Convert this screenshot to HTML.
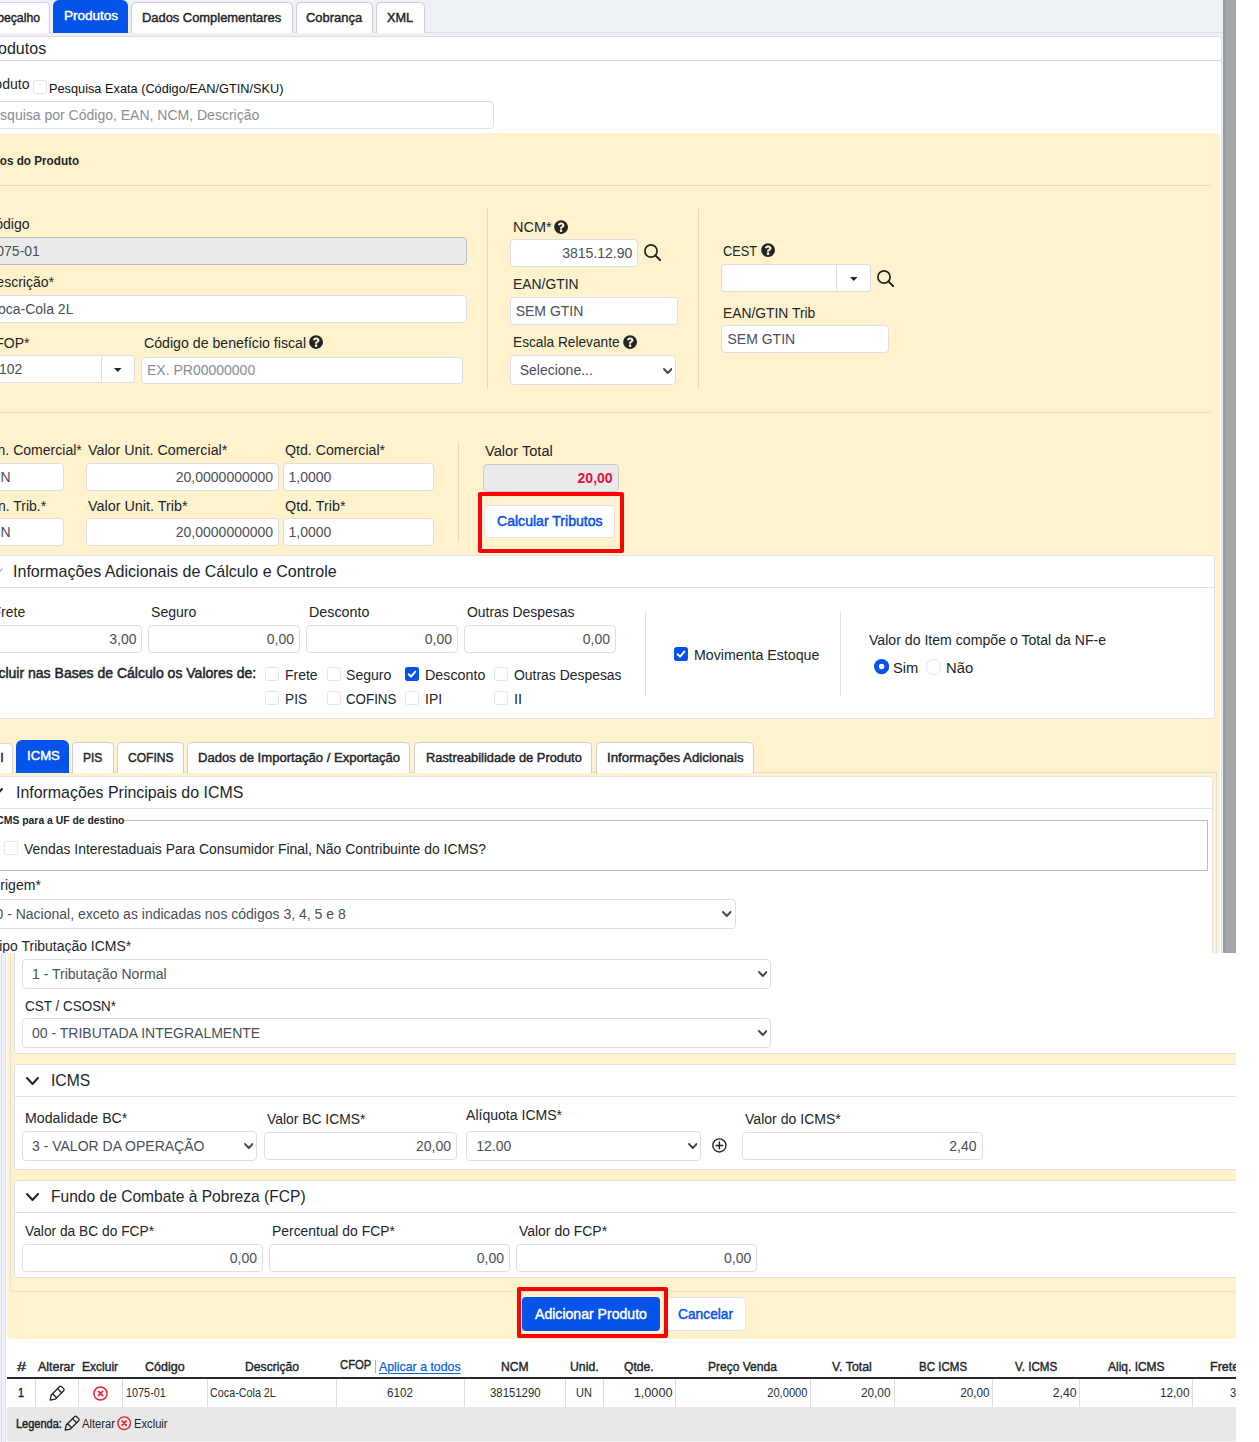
<!DOCTYPE html>
<html lang="pt-BR"><head><meta charset="utf-8"><title>NF-e - Produtos</title>
<style>
html,body{margin:0;padding:0;background:#fff;}
body{width:1259px;height:1442px;position:relative;overflow:hidden;font-family:"Liberation Sans",Arial,sans-serif;}
.clip{position:absolute;left:0;width:1236px;overflow:hidden;}
.in{position:absolute;left:0;width:1236px;}
.b{position:absolute;display:block;}
.t{position:absolute;white-space:nowrap;line-height:20px;height:20px;}
.m{display:inline-block;width:0;height:0;vertical-align:baseline;}

#t1{margin-top:0.72px;}
#t1{transform:scaleX(0.9000);}
#t2{margin-top:0.72px;}
#t2{transform:scaleX(0.9941);}
#t3{margin-top:0.72px;}
#t3{transform:scaleX(0.9490);}
#t4{margin-top:0.72px;}
#t4{transform:scaleX(0.9516);}
#t5{margin-top:0.72px;}
#t5{transform:scaleX(0.9337);}
#t6{margin-top:0.83px;}
#t6{transform:scaleX(0.9550);}
#t7{margin-top:0.09px;}
#t7{transform:scaleX(0.9550);}
#t8{margin-top:0.50px;}
#t8{transform:scaleX(0.9809);}
#t9{margin-top:-0.14px;}
#t10{margin-top:0.38px;}
#t10{transform:scaleX(0.9300);}
#t11{margin-top:0.09px;}
#t11{transform:scaleX(0.9550);}
#t12{margin-top:-0.14px;}
#t13{margin-top:0.10px;}
#t13{transform:scaleX(0.9550);}
#t14{margin-top:-0.14px;}
#t15{margin-top:0.10px;}
#t15{transform:scaleX(0.9550);}
#t16{margin-top:-0.14px;}
#t17{margin-top:0.10px;}
#t17{transform:scaleX(0.9637);}
#t18{margin-top:-0.14px;}
#t19{margin-top:0.09px;}
#t19{transform:scaleX(0.9854);}
#t20{margin-top:-0.14px;}
#t21{margin-top:0.09px;}
#t21{transform:scaleX(0.9456);}
#t22{margin-top:-0.14px;}
#t23{margin-top:0.09px;}
#t23{transform:scaleX(0.9325);}
#t24{margin-top:-0.14px;}
#t25{margin-top:0.10px;}
#t25{transform:scaleX(0.8705);}
#t26{margin-top:0.09px;}
#t26{transform:scaleX(0.9424);}
#t27{margin-top:-0.14px;}
#t28{margin-top:0.09px;}
#t28{transform:scaleX(0.9550);}
#t29{margin-top:0.09px;}
#t29{transform:scaleX(0.9718);}
#t30{margin-top:0.09px;}
#t30{transform:scaleX(0.9655);}
#t31{margin-top:-0.14px;}
#t32{margin-top:-0.14px;}
#t33{margin-top:-0.14px;}
#t34{margin-top:0.10px;}
#t34{transform:scaleX(0.9550);}
#t35{margin-top:0.10px;}
#t35{transform:scaleX(0.9787);}
#t36{margin-top:0.10px;}
#t36{transform:scaleX(0.9767);}
#t37{margin-top:-0.14px;}
#t38{margin-top:-0.14px;}
#t39{margin-top:-0.14px;}
#t40{margin-top:0.10px;}
#t40{transform:scaleX(0.9971);}
#t41{margin-top:-0.14px;}
#t42{margin-top:0.10px;}
#t42{transform:scaleX(0.9582);}
#t43{margin-top:-0.31px;}
#t43{transform:scaleX(0.9790);}
#t44{margin-top:0.10px;}
#t44{transform:scaleX(0.9550);}
#t45{margin-top:0.10px;}
#t45{transform:scaleX(0.9573);}
#t46{margin-top:0.10px;}
#t46{transform:scaleX(0.9724);}
#t47{margin-top:0.10px;}
#t47{transform:scaleX(0.9459);}
#t48{margin-top:-0.14px;}
#t49{margin-top:-0.14px;}
#t50{margin-top:-0.14px;}
#t51{margin-top:-0.14px;}
#t52{margin-top:0.09px;}
#t52{transform:scaleX(0.9550);}
#t53{margin-top:0.09px;}
#t53{transform:scaleX(0.9510);}
#t54{margin-top:0.09px;}
#t54{transform:scaleX(0.9573);}
#t55{margin-top:0.09px;}
#t55{transform:scaleX(0.9724);}
#t56{margin-top:0.09px;}
#t56{transform:scaleX(0.9481);}
#t57{margin-top:0.10px;}
#t57{transform:scaleX(0.9330);}
#t58{margin-top:0.10px;}
#t58{transform:scaleX(0.9072);}
#t59{margin-top:0.10px;}
#t59{transform:scaleX(0.9517);}
#t60{margin-top:0.10px;}
#t60{transform:scaleX(0.9912);}
#t61{margin-top:0.09px;}
#t61{transform:scaleX(0.9656);}
#t62{margin-top:0.10px;}
#t62{transform:scaleX(0.9606);}
#t63{margin-top:0.10px;}
#t63{transform:scaleX(1.0021);}
#t64{margin-top:0.10px;}
#t64{transform:scaleX(1.0054);}
#t65{margin-top:0.72px;}
#t65{transform:scaleX(0.9250);}
#t66{margin-top:0.72px;}
#t66{transform:scaleX(0.9666);}
#t67{margin-top:0.72px;}
#t67{transform:scaleX(0.8827);}
#t68{margin-top:0.72px;}
#t68{transform:scaleX(0.8879);}
#t69{margin-top:0.72px;}
#t69{transform:scaleX(0.9620);}
#t70{margin-top:0.72px;}
#t70{transform:scaleX(0.9460);}
#t71{margin-top:0.72px;}
#t71{transform:scaleX(0.9771);}
#t72{margin-top:-0.31px;}
#t72{transform:scaleX(0.9708);}
#t73{margin-top:-0.36px;}
#t73{transform:scaleX(0.9900);}
#t74{margin-top:0.09px;}
#t74{transform:scaleX(0.9481);}
#t75{margin-top:0.09px;}
#t75{transform:scaleX(0.9550);}
#t76{margin-top:-0.14px;}
#t77{margin-top:0.10px;}
#t77{transform:scaleX(0.9510);}
#t78{margin-top:-0.14px;}
#t79{margin-top:0.10px;}
#t79{transform:scaleX(0.9173);}
#t80{margin-top:-0.14px;}
#t81{margin-top:-0.31px;}
#t81{transform:scaleX(0.9540);}
#t82{margin-top:0.10px;}
#t82{transform:scaleX(0.9643);}
#t83{margin-top:0.10px;}
#t83{transform:scaleX(0.9438);}
#t84{margin-top:0.10px;}
#t84{transform:scaleX(0.9570);}
#t85{margin-top:0.10px;}
#t85{transform:scaleX(0.9572);}
#t86{margin-top:-0.14px;}
#t87{margin-top:-0.14px;}
#t88{margin-top:-0.14px;}
#t89{margin-top:-0.14px;}
#t90{margin-top:-0.31px;}
#t90{transform:scaleX(0.9505);}
#t91{margin-top:0.10px;}
#t91{transform:scaleX(0.9376);}
#t92{margin-top:0.10px;}
#t92{transform:scaleX(0.9464);}
#t93{margin-top:0.10px;}
#t93{transform:scaleX(0.9494);}
#t94{margin-top:-0.14px;}
#t95{margin-top:-0.14px;}
#t96{margin-top:-0.14px;}
#t97{margin-top:0.09px;}
#t97{transform:scaleX(0.9374);}
#t98{margin-top:0.09px;}
#t98{transform:scaleX(0.9583);}
#t99{margin-top:0.38px;}
#t99{transform:scaleX(1.2971);}
#t100{margin-top:0.38px;}
#t100{transform:scaleX(0.9867);}
#t101{margin-top:0.38px;}
#t101{transform:scaleX(0.9551);}
#t102{margin-top:0.38px;}
#t102{transform:scaleX(0.9919);}
#t103{margin-top:0.38px;}
#t103{transform:scaleX(0.9661);}
#t104{margin-top:0.38px;}
#t104{transform:scaleX(0.8961);}
#t105{margin-top:0.38px;}
#t105{transform:scaleX(0.9794);}
#t106{margin-top:0.38px;}
#t106{transform:scaleX(0.9621);}
#t107{margin-top:0.38px;}
#t107{transform:scaleX(0.9726);}
#t108{margin-top:0.38px;}
#t108{transform:scaleX(0.9606);}
#t109{margin-top:0.38px;}
#t109{transform:scaleX(0.9546);}
#t110{margin-top:0.38px;}
#t110{transform:scaleX(0.9809);}
#t111{margin-top:0.38px;}
#t111{transform:scaleX(0.9165);}
#t112{margin-top:0.38px;}
#t112{transform:scaleX(0.9260);}
#t113{margin-top:0.38px;}
#t113{transform:scaleX(0.9515);}
#t114{margin-top:0.38px;}
#t114{transform:scaleX(0.9981);}
#t115{margin-top:0.38px;}
#t115{transform:scaleX(0.8695);}
#t116{margin-top:0.38px;}
#t116{transform:scaleX(0.8622);}
#t117{margin-top:0.38px;}
#t117{transform:scaleX(0.8550);}
#t118{margin-top:0.38px;}
#t118{transform:scaleX(0.9222);}
#t119{margin-top:0.38px;}
#t119{transform:scaleX(0.9028);}
#t120{margin-top:0.38px;}
#t120{transform:scaleX(0.8707);}
#t121{margin-top:0.38px;}
#t121{transform:scaleX(1.0083);}
#t122{margin-top:0.38px;}
#t122{transform:scaleX(0.8862);}
#t123{margin-top:0.38px;}
#t123{transform:scaleX(0.9392);}
#t124{margin-top:0.38px;}
#t124{transform:scaleX(0.9313);}
#t125{margin-top:0.38px;}
#t125{transform:scaleX(0.9728);}
#t126{margin-top:0.38px;}
#t126{transform:scaleX(0.9392);}
#t127{margin-top:0.38px;}
#t127{transform:scaleX(0.8811);}
#t128{margin-top:0.17px;}
#t128{transform:scaleX(0.9159);}
#t129{margin-top:0.17px;}
#t129{transform:scaleX(0.9337);}
#t130{margin-top:0.17px;}
#t130{transform:scaleX(0.9329);}
</style></head>
<body>
<div class="clip" style="top:0;height:953px;background:#edf0f5;"><div class="in" style="top:0;height:953px;">
<div class="b" style="left:0px;top:32px;width:1223px;height:1px;background:#dfe2e6;"></div>
<div class="b" style="left:-40px;top:2px;width:89.5px;height:31px;background:#fff;border:1px solid #d3d6da;border-radius:5px 5px 0 0;box-sizing:border-box;border-bottom:none;"></div>
<span class="t" id="t1" style="top:7.29px;font-size:13.6px;color:#212529;-webkit-text-stroke:0.45px #212529;right:1196.20px;transform-origin:100% 50%;">Cabeçalho</span>
<div class="b" style="left:53px;top:-0.5px;width:75px;height:33.5px;background:#0653ea;border-radius:6px 6px 0 0;"></div>
<span class="t" id="t2" style="top:5.29px;font-size:13.6px;color:#fff;-webkit-text-stroke:0.45px #fff;left:63.70px;transform-origin:0 50%;">Produtos</span>
<div class="b" style="left:130.6px;top:2px;width:162.9px;height:31px;background:#fff;border:1px solid #cbced2;border-radius:5px 5px 0 0;box-sizing:border-box;border-bottom:none;"></div>
<span class="t" id="t3" style="top:7.29px;font-size:13.6px;color:#212529;-webkit-text-stroke:0.45px #212529;left:142.20px;transform-origin:0 50%;">Dados Complementares</span>
<div class="b" style="left:295.6px;top:2px;width:77.9px;height:31px;background:#fff;border:1px solid #cbced2;border-radius:5px 5px 0 0;box-sizing:border-box;border-bottom:none;"></div>
<span class="t" id="t4" style="top:7.29px;font-size:13.6px;color:#212529;-webkit-text-stroke:0.45px #212529;left:306.20px;transform-origin:0 50%;">Cobrança</span>
<div class="b" style="left:375.6px;top:2px;width:49.9px;height:31px;background:#fff;border:1px solid #cbced2;border-radius:5px 5px 0 0;box-sizing:border-box;border-bottom:none;"></div>
<span class="t" id="t5" style="top:7.29px;font-size:13.6px;color:#212529;-webkit-text-stroke:0.45px #212529;left:387.20px;transform-origin:0 50%;">XML</span>
<div class="b" style="left:-10px;top:36px;width:1232px;height:930px;background:#fff;border:1px solid #dcdee1;border-radius:4px;box-sizing:border-box;"></div>
<div class="b" style="left:-10px;top:60px;width:1231px;height:1px;background:#d4d6d8;"></div>
<span class="t" id="t6" style="top:37.88px;font-size:16.8px;color:#212529;right:1189.70px;transform-origin:100% 50%;">Produtos</span>
<span class="t" id="t7" style="top:73.91px;font-size:14.7px;color:#212529;right:1206.20px;transform-origin:100% 50%;">Produto</span>
<div class="b" style="left:33.300000000000004px;top:80.0px;width:14px;height:14px;background:#fff;border:1px solid #e2e5e9;border-radius:2.5px;box-sizing:border-box;"></div>
<span class="t" id="t8" style="top:78.50px;font-size:13px;color:#111;left:48.70px;transform-origin:0 50%;">Pesquisa Exata (Código/EAN/GTIN/SKU)</span>
<div class="b" style="left:-10px;top:101.2px;width:503.5px;height:27.6px;background:#fff;border:1px solid #dcdee2;border-radius:4px;box-sizing:border-box;"></div>
<span class="t" id="t9" style="top:104.65px;font-size:14px;color:#868e96;left:-17.00px;transform-origin:0 50%;">Pesquisa por Código, EAN, NCM, Descrição</span>
<div class="b" style="left:-10px;top:133px;width:1230px;height:900px;background:#fff2cc;border-radius:5px;"></div>
<span class="t" id="t10" style="top:150.13px;font-size:12.6px;color:#212529;font-weight:700;right:1157.20px;transform-origin:100% 50%;">Dados do Produto</span>
<div class="b" style="left:-10px;top:185px;width:1220px;height:1px;background:#e3dcc4;"></div>
<span class="t" id="t11" style="top:213.91px;font-size:14.7px;color:#212529;right:1206.20px;transform-origin:100% 50%;">Código</span>
<div class="b" style="left:-10px;top:237px;width:477px;height:28px;background:#ebebeb;border:1px solid #b9bcbf;border-radius:4px;box-sizing:border-box;"></div>
<span class="t" id="t12" style="top:241.15px;font-size:14px;color:#495057;left:-11.50px;transform-origin:0 50%;">1075-01</span>
<span class="t" id="t13" style="top:271.71px;font-size:14.7px;color:#212529;right:1182.20px;transform-origin:100% 50%;">Descrição*</span>
<div class="b" style="left:-10px;top:295.4px;width:476.5px;height:27.6px;background:#fff;border:1px solid #dcdee2;border-radius:4px;box-sizing:border-box;"></div>
<span class="t" id="t14" style="top:299.15px;font-size:14px;color:#495057;left:-12.20px;transform-origin:0 50%;">Coca-Cola 2L</span>
<span class="t" id="t15" style="top:332.71px;font-size:14.7px;color:#212529;right:1206.20px;transform-origin:100% 50%;">CFOP*</span>
<div class="b" style="left:-10px;top:355.4px;width:144.5px;height:27.6px;background:#fff;border:1px solid #dcdee2;border-radius:4px;box-sizing:border-box;"></div>
<span class="t" id="t16" style="top:359.15px;font-size:14px;color:#495057;left:-8.80px;transform-origin:0 50%;">6102</span>
<div class="b" style="left:100.5px;top:356.4px;width:1px;height:25.6px;background:#dcdee2;"></div>
<svg class="b" style="left:114.05px;top:367.7px" width="7.5" height="4" viewBox="0 0 7.5 4"><path d="M0 0 H7.5 L3.75 4 Z" fill="#212529"/></svg>
<span class="t" id="t17" style="top:333.21px;font-size:14.7px;color:#212529;left:143.80px;transform-origin:0 50%;">Código de benefício fiscal</span>
<svg class="b" style="left:308.9px;top:335.4px" width="14.2" height="14.2" viewBox="0 0 512 512"><path fill="#212529" d="M504 256c0 136.997-111.043 248-248 248S8 392.997 8 256C8 119.083 119.043 8 256 8s248 111.083 248 248zM262.655 90c-54.497 0-89.255 22.957-116.549 63.758-3.536 5.286-2.353 12.415 2.715 16.258l34.699 26.31c5.205 3.947 12.621 3.008 16.665-2.122 17.864-22.658 30.113-35.797 57.303-35.797 20.429 0 45.698 13.148 45.698 32.958 0 14.976-12.363 22.667-32.534 33.976C247.128 238.528 216 254.941 216 296v4c0 6.627 5.373 12 12 12h56c6.627 0 12-5.373 12-12v-1.333c0-28.462 83.186-29.647 83.186-106.667 0-58.002-60.165-102-116.531-102zM256 338c-25.365 0-46 20.635-46 46 0 25.364 20.635 46 46 46s46-20.636 46-46c0-25.365-20.635-46-46-46z"/></svg>
<div class="b" style="left:141px;top:356.6px;width:321.5px;height:27.2px;background:#fff;border:1px solid #dcdee2;border-radius:4px;box-sizing:border-box;"></div>
<span class="t" id="t18" style="top:359.65px;font-size:14px;color:#868e96;left:147.00px;transform-origin:0 50%;">EX. PR00000000</span>
<div class="b" style="left:487px;top:209px;width:1px;height:180px;background:#e0dac3;"></div>
<span class="t" id="t19" style="top:216.91px;font-size:14.7px;color:#212529;left:512.80px;transform-origin:0 50%;">NCM*</span>
<svg class="b" style="left:553.9px;top:219.9px" width="14.2" height="14.2" viewBox="0 0 512 512"><path fill="#212529" d="M504 256c0 136.997-111.043 248-248 248S8 392.997 8 256C8 119.083 119.043 8 256 8s248 111.083 248 248zM262.655 90c-54.497 0-89.255 22.957-116.549 63.758-3.536 5.286-2.353 12.415 2.715 16.258l34.699 26.31c5.205 3.947 12.621 3.008 16.665-2.122 17.864-22.658 30.113-35.797 57.303-35.797 20.429 0 45.698 13.148 45.698 32.958 0 14.976-12.363 22.667-32.534 33.976C247.128 238.528 216 254.941 216 296v4c0 6.627 5.373 12 12 12h56c6.627 0 12-5.373 12-12v-1.333c0-28.462 83.186-29.647 83.186-106.667 0-58.002-60.165-102-116.531-102zM256 338c-25.365 0-46 20.635-46 46 0 25.364 20.635 46 46 46s46-20.636 46-46c0-25.365-20.635-46-46-46z"/></svg>
<div class="b" style="left:510.2px;top:239.4px;width:127.6px;height:27.2px;background:#fff;border:1px solid #dcdee2;border-radius:4px;box-sizing:border-box;"></div>
<span class="t" id="t20" style="top:242.65px;font-size:14px;color:#495057;right:603.70px;transform-origin:100% 50%;">3815.12.90</span>
<svg class="b" style="left:643.8px;top:243.8px" width="17.5" height="17.5" viewBox="0 0 17.5 17.5"><circle cx="7" cy="7" r="6.1" fill="none" stroke="#212529" stroke-width="1.7"/><path d="M11.4 11.4 L16.3 16.3" stroke="#212529" stroke-width="2" stroke-linecap="round"/></svg>
<span class="t" id="t21" style="top:273.91px;font-size:14.7px;color:#212529;left:512.80px;transform-origin:0 50%;">EAN/GTIN</span>
<div class="b" style="left:510.2px;top:297.4px;width:168.2px;height:27.4px;background:#fff;border:1px solid #dcdee2;border-radius:4px;box-sizing:border-box;"></div>
<span class="t" id="t22" style="top:300.65px;font-size:14px;color:#495057;left:515.70px;transform-origin:0 50%;">SEM GTIN</span>
<span class="t" id="t23" style="top:331.91px;font-size:14.7px;color:#212529;left:512.80px;transform-origin:0 50%;">Escala Relevante</span>
<svg class="b" style="left:623.1px;top:335.4px" width="14.2" height="14.2" viewBox="0 0 512 512"><path fill="#212529" d="M504 256c0 136.997-111.043 248-248 248S8 392.997 8 256C8 119.083 119.043 8 256 8s248 111.083 248 248zM262.655 90c-54.497 0-89.255 22.957-116.549 63.758-3.536 5.286-2.353 12.415 2.715 16.258l34.699 26.31c5.205 3.947 12.621 3.008 16.665-2.122 17.864-22.658 30.113-35.797 57.303-35.797 20.429 0 45.698 13.148 45.698 32.958 0 14.976-12.363 22.667-32.534 33.976C247.128 238.528 216 254.941 216 296v4c0 6.627 5.373 12 12 12h56c6.627 0 12-5.373 12-12v-1.333c0-28.462 83.186-29.647 83.186-106.667 0-58.002-60.165-102-116.531-102zM256 338c-25.365 0-46 20.635-46 46 0 25.364 20.635 46 46 46s46-20.636 46-46c0-25.365-20.635-46-46-46z"/></svg>
<div class="b" style="left:510.2px;top:355.4px;width:166px;height:29.4px;background:#fff;border:1px solid #dcdee2;border-radius:4px;box-sizing:border-box;"></div>
<span class="t" id="t24" style="top:359.65px;font-size:14px;color:#495057;left:519.70px;transform-origin:0 50%;">Selecione...</span>
<svg class="b" style="left:662.7px;top:367.49999999999994px" width="9.6" height="6.0" viewBox="-1 -1 9.6 6.0"><path d="M0 0 L3.8 4.0 L7.6 0" fill="none" stroke="#474a4d" stroke-width="1.9" stroke-linecap="round" stroke-linejoin="round"/></svg>
<div class="b" style="left:698px;top:209px;width:1px;height:180px;background:#e0dac3;"></div>
<span class="t" id="t25" style="top:240.71px;font-size:14.7px;color:#212529;left:723.40px;transform-origin:0 50%;">CEST</span>
<svg class="b" style="left:761.1px;top:243.4px" width="14.2" height="14.2" viewBox="0 0 512 512"><path fill="#212529" d="M504 256c0 136.997-111.043 248-248 248S8 392.997 8 256C8 119.083 119.043 8 256 8s248 111.083 248 248zM262.655 90c-54.497 0-89.255 22.957-116.549 63.758-3.536 5.286-2.353 12.415 2.715 16.258l34.699 26.31c5.205 3.947 12.621 3.008 16.665-2.122 17.864-22.658 30.113-35.797 57.303-35.797 20.429 0 45.698 13.148 45.698 32.958 0 14.976-12.363 22.667-32.534 33.976C247.128 238.528 216 254.941 216 296v4c0 6.627 5.373 12 12 12h56c6.627 0 12-5.373 12-12v-1.333c0-28.462 83.186-29.647 83.186-106.667 0-58.002-60.165-102-116.531-102zM256 338c-25.365 0-46 20.635-46 46 0 25.364 20.635 46 46 46s46-20.636 46-46c0-25.365-20.635-46-46-46z"/></svg>
<div class="b" style="left:721px;top:264.4px;width:149.5px;height:27.4px;background:#fff;border:1px solid #dcdee2;border-radius:4px;box-sizing:border-box;"></div>
<div class="b" style="left:836px;top:265.4px;width:1px;height:25.4px;background:#dcdee2;"></div>
<svg class="b" style="left:849.8px;top:276.59999999999997px" width="7.5" height="4" viewBox="0 0 7.5 4"><path d="M0 0 H7.5 L3.75 4 Z" fill="#212529"/></svg>
<svg class="b" style="left:876.8px;top:269.5px" width="17.5" height="17.5" viewBox="0 0 17.5 17.5"><circle cx="7" cy="7" r="6.1" fill="none" stroke="#212529" stroke-width="1.7"/><path d="M11.4 11.4 L16.3 16.3" stroke="#212529" stroke-width="2" stroke-linecap="round"/></svg>
<span class="t" id="t26" style="top:302.91px;font-size:14.7px;color:#212529;left:723.40px;transform-origin:0 50%;">EAN/GTIN Trib</span>
<div class="b" style="left:721px;top:325.4px;width:167.5px;height:27.4px;background:#fff;border:1px solid #dcdee2;border-radius:4px;box-sizing:border-box;"></div>
<span class="t" id="t27" style="top:328.95px;font-size:14px;color:#495057;left:727.50px;transform-origin:0 50%;">SEM GTIN</span>
<div class="b" style="left:-10px;top:412px;width:1220px;height:1px;background:#e3dcc4;"></div>
<span class="t" id="t28" style="top:439.91px;font-size:14.7px;color:#212529;right:1154.20px;transform-origin:100% 50%;">Un. Comercial*</span>
<span class="t" id="t29" style="top:439.91px;font-size:14.7px;color:#212529;left:87.80px;transform-origin:0 50%;">Valor Unit. Comercial*</span>
<span class="t" id="t30" style="top:439.91px;font-size:14.7px;color:#212529;left:285.30px;transform-origin:0 50%;">Qtd. Comercial*</span>
<div class="b" style="left:-10px;top:463.3px;width:73.6px;height:27.6px;background:#fff;border:1px solid #dcdee2;border-radius:4px;box-sizing:border-box;"></div>
<span class="t" id="t31" style="top:467.15px;font-size:14px;color:#495057;left:-9.50px;transform-origin:0 50%;">UN</span>
<div class="b" style="left:86px;top:463.3px;width:192.6px;height:27.6px;background:#fff;border:1px solid #dcdee2;border-radius:4px;box-sizing:border-box;"></div>
<span class="t" id="t32" style="top:467.15px;font-size:14px;color:#495057;right:962.90px;transform-origin:100% 50%;">20,0000000000</span>
<div class="b" style="left:283px;top:463.3px;width:151.4px;height:27.6px;background:#fff;border:1px solid #dcdee2;border-radius:4px;box-sizing:border-box;"></div>
<span class="t" id="t33" style="top:467.15px;font-size:14px;color:#495057;left:288.50px;transform-origin:0 50%;">1,0000</span>
<span class="t" id="t34" style="top:495.71px;font-size:14.7px;color:#212529;right:1190.20px;transform-origin:100% 50%;">Un. Trib.*</span>
<span class="t" id="t35" style="top:495.71px;font-size:14.7px;color:#212529;left:87.80px;transform-origin:0 50%;">Valor Unit. Trib*</span>
<span class="t" id="t36" style="top:495.71px;font-size:14.7px;color:#212529;left:285.30px;transform-origin:0 50%;">Qtd. Trib*</span>
<div class="b" style="left:-10px;top:518.4px;width:73.6px;height:27.6px;background:#fff;border:1px solid #dcdee2;border-radius:4px;box-sizing:border-box;"></div>
<span class="t" id="t37" style="top:522.15px;font-size:14px;color:#495057;left:-9.50px;transform-origin:0 50%;">UN</span>
<div class="b" style="left:86px;top:518.4px;width:192.6px;height:27.6px;background:#fff;border:1px solid #dcdee2;border-radius:4px;box-sizing:border-box;"></div>
<span class="t" id="t38" style="top:522.15px;font-size:14px;color:#495057;right:962.90px;transform-origin:100% 50%;">20,0000000000</span>
<div class="b" style="left:283px;top:518.4px;width:151.4px;height:27.6px;background:#fff;border:1px solid #dcdee2;border-radius:4px;box-sizing:border-box;"></div>
<span class="t" id="t39" style="top:522.15px;font-size:14px;color:#495057;left:288.50px;transform-origin:0 50%;">1,0000</span>
<div class="b" style="left:458px;top:442px;width:1px;height:100px;background:#e0dac3;"></div>
<span class="t" id="t40" style="top:441.21px;font-size:14.7px;color:#212529;left:485.30px;transform-origin:0 50%;">Valor Total</span>
<div class="b" style="left:483px;top:464.4px;width:135.6px;height:27.6px;background:#ebebeb;border:1px solid #c8cacc;border-radius:4px;box-sizing:border-box;"></div>
<span class="t" id="t41" style="top:467.65px;font-size:14px;color:#dc143c;font-weight:700;right:623.40px;transform-origin:100% 50%;">20,00</span>
<div class="b" style="left:478px;top:492px;width:146px;height:60.5px;border:4px solid #fb0207;border-radius:2px;box-sizing:border-box;"></div>
<div class="b" style="left:484px;top:504.5px;width:130.5px;height:33px;background:#fff;border:1px solid #e1e3e6;border-radius:4px;box-sizing:border-box;"></div>
<span class="t" id="t42" style="top:511.21px;font-size:14.7px;color:#0653ea;-webkit-text-stroke:0.5px #0653ea;left:496.55px;transform-origin:0 50%;">Calcular Tributos</span>
<div class="b" style="left:-10px;top:555px;width:1224.5px;height:163.5px;background:#fff;border:1px solid #dfe1e4;border-radius:3px;box-sizing:border-box;"></div>
<div class="b" style="left:-10px;top:587px;width:1224px;height:1px;background:#dfe1e4;"></div>
<svg class="b" style="left:-10.5px;top:567.5px" width="13" height="8" viewBox="-1 -1 13 8"><path d="M0 0 L5.5 6 L11 0" fill="none" stroke="#9dbdf7" stroke-width="1.6" stroke-linecap="round" stroke-linejoin="round"/></svg>
<span class="t" id="t43" style="top:561.32px;font-size:16.4px;color:#212529;left:13.45px;transform-origin:0 50%;">Informações Adicionais de Cálculo e Controle</span>
<span class="t" id="t44" style="top:601.71px;font-size:14.7px;color:#212529;right:1211.20px;transform-origin:100% 50%;">Frete</span>
<span class="t" id="t45" style="top:601.71px;font-size:14.7px;color:#212529;left:150.55px;transform-origin:0 50%;">Seguro</span>
<span class="t" id="t46" style="top:601.71px;font-size:14.7px;color:#212529;left:309.05px;transform-origin:0 50%;">Desconto</span>
<span class="t" id="t47" style="top:601.71px;font-size:14.7px;color:#212529;left:466.55px;transform-origin:0 50%;">Outras Despesas</span>
<div class="b" style="left:-10px;top:625.4px;width:152px;height:27.6px;background:#fff;border:1px solid #dcdee2;border-radius:4px;box-sizing:border-box;"></div>
<span class="t" id="t48" style="top:628.95px;font-size:14px;color:#495057;right:1099.50px;transform-origin:100% 50%;">3,00</span>
<div class="b" style="left:148px;top:625.4px;width:151.5px;height:27.6px;background:#fff;border:1px solid #dcdee2;border-radius:4px;box-sizing:border-box;"></div>
<span class="t" id="t49" style="top:628.95px;font-size:14px;color:#495057;right:942.00px;transform-origin:100% 50%;">0,00</span>
<div class="b" style="left:306px;top:625.4px;width:151.5px;height:27.6px;background:#fff;border:1px solid #dcdee2;border-radius:4px;box-sizing:border-box;"></div>
<span class="t" id="t50" style="top:628.95px;font-size:14px;color:#495057;right:784.00px;transform-origin:100% 50%;">0,00</span>
<div class="b" style="left:464px;top:625.4px;width:151.5px;height:27.6px;background:#fff;border:1px solid #dcdee2;border-radius:4px;box-sizing:border-box;"></div>
<span class="t" id="t51" style="top:628.95px;font-size:14px;color:#495057;right:626.00px;transform-origin:100% 50%;">0,00</span>
<span class="t" id="t52" style="top:662.91px;font-size:14.7px;color:#212529;-webkit-text-stroke:0.5px #212529;right:980.20px;transform-origin:100% 50%;">Incluir nas Bases de Cálculo os Valores de:</span>
<div class="b" style="left:265.0px;top:667.0999999999999px;width:14px;height:14px;background:#fff;border:1px solid #e2e5e9;border-radius:2.5px;box-sizing:border-box;"></div>
<span class="t" id="t53" style="top:664.91px;font-size:14.7px;color:#212529;left:284.80px;transform-origin:0 50%;">Frete</span>
<div class="b" style="left:326.7px;top:667.0999999999999px;width:14px;height:14px;background:#fff;border:1px solid #e2e5e9;border-radius:2.5px;box-sizing:border-box;"></div>
<span class="t" id="t54" style="top:664.91px;font-size:14.7px;color:#212529;left:346.05px;transform-origin:0 50%;">Seguro</span>
<svg class="b" style="left:404.7px;top:667.0999999999999px" width="14" height="14" viewBox="0 0 20 20"><rect width="20" height="20" rx="4" fill="#0653ea"/><path d="M5.2 10.4 L8.6 13.8 L14.8 6.6" fill="none" stroke="#fff" stroke-width="2.7" stroke-linecap="round" stroke-linejoin="round"/></svg>
<span class="t" id="t55" style="top:664.91px;font-size:14.7px;color:#212529;left:424.80px;transform-origin:0 50%;">Desconto</span>
<div class="b" style="left:494.2px;top:667.0999999999999px;width:14px;height:14px;background:#fff;border:1px solid #e2e5e9;border-radius:2.5px;box-sizing:border-box;"></div>
<span class="t" id="t56" style="top:664.91px;font-size:14.7px;color:#212529;left:513.55px;transform-origin:0 50%;">Outras Despesas</span>
<div class="b" style="left:265.0px;top:690.8px;width:14px;height:14px;background:#fff;border:1px solid #e2e5e9;border-radius:2.5px;box-sizing:border-box;"></div>
<span class="t" id="t57" style="top:688.71px;font-size:14.7px;color:#212529;left:284.80px;transform-origin:0 50%;">PIS</span>
<div class="b" style="left:326.7px;top:690.8px;width:14px;height:14px;background:#fff;border:1px solid #e2e5e9;border-radius:2.5px;box-sizing:border-box;"></div>
<span class="t" id="t58" style="top:688.71px;font-size:14.7px;color:#212529;left:346.05px;transform-origin:0 50%;">COFINS</span>
<div class="b" style="left:404.7px;top:690.8px;width:14px;height:14px;background:#fff;border:1px solid #e2e5e9;border-radius:2.5px;box-sizing:border-box;"></div>
<span class="t" id="t59" style="top:688.71px;font-size:14.7px;color:#212529;left:424.80px;transform-origin:0 50%;">IPI</span>
<div class="b" style="left:494.2px;top:690.8px;width:14px;height:14px;background:#fff;border:1px solid #e2e5e9;border-radius:2.5px;box-sizing:border-box;"></div>
<span class="t" id="t60" style="top:688.71px;font-size:14.7px;color:#212529;left:513.80px;transform-origin:0 50%;">II</span>
<div class="b" style="left:645px;top:611px;width:1px;height:84.5px;background:#dfe1e4;"></div>
<svg class="b" style="left:674.1px;top:646.8px" width="14" height="14" viewBox="0 0 20 20"><rect width="20" height="20" rx="4" fill="#0653ea"/><path d="M5.2 10.4 L8.6 13.8 L14.8 6.6" fill="none" stroke="#fff" stroke-width="2.7" stroke-linecap="round" stroke-linejoin="round"/></svg>
<span class="t" id="t61" style="top:645.11px;font-size:14.7px;color:#212529;left:694.05px;transform-origin:0 50%;">Movimenta Estoque</span>
<div class="b" style="left:840px;top:611px;width:1px;height:84.5px;background:#dfe1e4;"></div>
<span class="t" id="t62" style="top:630.31px;font-size:14.7px;color:#212529;left:868.55px;transform-origin:0 50%;">Valor do Item compõe o Total da NF-e</span>
<svg class="b" style="left:873.65px;top:659.4px" width="15.2" height="15.2" viewBox="0 0 20 20"><circle cx="10" cy="10" r="10" fill="#0653ea"/><circle cx="10" cy="10" r="3.6" fill="#fff"/></svg>
<span class="t" id="t63" style="top:658.21px;font-size:14.7px;color:#212529;left:892.80px;transform-origin:0 50%;">Sim</span>
<div class="b" style="left:926.15px;top:659.4px;width:15.2px;height:15.2px;background:#fff;border:1px solid #e2e5e9;border-radius:50%;box-sizing:border-box;"></div>
<span class="t" id="t64" style="top:658.21px;font-size:14.7px;color:#212529;left:945.55px;transform-origin:0 50%;">Não</span>
<div class="b" style="left:-10px;top:772px;width:1227px;height:400px;border:1px solid #e2decb;box-sizing:border-box;"></div>
<div class="b" style="left:-30px;top:742.5px;width:42.5px;height:30.5px;background:#fff;border:1px solid #d3d6da;border-radius:5px 5px 0 0;box-sizing:border-box;border-bottom:none;"></div>
<span class="t" id="t65" style="top:747.29px;font-size:13.6px;color:#212529;-webkit-text-stroke:0.45px #212529;right:1232.70px;transform-origin:100% 50%;">IPI</span>
<div class="b" style="left:16px;top:739.7px;width:52.75px;height:33.299999999999955px;background:#0653ea;border-radius:6px 6px 0 0;"></div>
<span class="t" id="t66" style="top:745.29px;font-size:13.6px;color:#fff;-webkit-text-stroke:0.45px #fff;left:26.70px;transform-origin:0 50%;">ICMS</span>
<div class="b" style="left:72.1px;top:742.2px;width:41.65px;height:30.799999999999955px;background:#fff;border:1px solid #cbced2;border-radius:5px 5px 0 0;box-sizing:border-box;border-bottom:none;"></div>
<span class="t" id="t67" style="top:747.29px;font-size:13.6px;color:#212529;-webkit-text-stroke:0.45px #212529;left:83.45px;transform-origin:0 50%;">PIS</span>
<div class="b" style="left:117.1px;top:742.2px;width:66.65px;height:30.799999999999955px;background:#fff;border:1px solid #cbced2;border-radius:5px 5px 0 0;box-sizing:border-box;border-bottom:none;"></div>
<span class="t" id="t68" style="top:747.29px;font-size:13.6px;color:#212529;-webkit-text-stroke:0.45px #212529;left:127.70px;transform-origin:0 50%;">COFINS</span>
<div class="b" style="left:186.6px;top:742.2px;width:223.9px;height:30.799999999999955px;background:#fff;border:1px solid #cbced2;border-radius:5px 5px 0 0;box-sizing:border-box;border-bottom:none;"></div>
<span class="t" id="t69" style="top:747.29px;font-size:13.6px;color:#212529;-webkit-text-stroke:0.45px #212529;left:198.20px;transform-origin:0 50%;">Dados de Importação / Exportação</span>
<div class="b" style="left:414.1px;top:742.2px;width:178.4px;height:30.799999999999955px;background:#fff;border:1px solid #cbced2;border-radius:5px 5px 0 0;box-sizing:border-box;border-bottom:none;"></div>
<span class="t" id="t70" style="top:747.29px;font-size:13.6px;color:#212529;-webkit-text-stroke:0.45px #212529;left:425.70px;transform-origin:0 50%;">Rastreabilidade de Produto</span>
<div class="b" style="left:595.85px;top:742.2px;width:158.65px;height:30.799999999999955px;background:#fff;border:1px solid #cbced2;border-radius:5px 5px 0 0;box-sizing:border-box;border-bottom:none;"></div>
<span class="t" id="t71" style="top:747.29px;font-size:13.6px;color:#212529;-webkit-text-stroke:0.45px #212529;left:606.95px;transform-origin:0 50%;">Informações Adicionais</span>
<div class="b" style="left:-10px;top:776px;width:1223px;height:400px;background:#fff;border:1px solid #e3e5e8;border-radius:3px;box-sizing:border-box;"></div>
<div class="b" style="left:-10px;top:808px;width:1222px;height:1px;background:#dfe1e4;"></div>
<svg class="b" style="left:-9.8px;top:788.3px" width="13" height="8" viewBox="-1 -1 13 8"><path d="M0 0 L5.5 6 L11 0" fill="none" stroke="#212529" stroke-width="2" stroke-linecap="round" stroke-linejoin="round"/></svg>
<span class="t" id="t72" style="top:782.32px;font-size:16.4px;color:#212529;left:16.00px;transform-origin:0 50%;">Informações Principais do ICMS</span>
<div class="b" style="left:-10px;top:820px;width:1217.7px;height:50.5px;border:1px solid #bcbcbc;box-sizing:border-box;"></div>
<div class="b" style="left:-10px;top:815px;width:134px;height:10px;background:#fff;"></div>
<span class="t" id="t73" style="top:810.16px;font-size:10.5px;color:#212529;font-weight:700;right:1111.95px;transform-origin:100% 50%;">ICMS para a UF de destino</span>
<div class="b" style="left:4.1000000000000005px;top:841.0px;width:14px;height:14px;background:#fff;border:1px solid #e2e5e9;border-radius:2.5px;box-sizing:border-box;"></div>
<span class="t" id="t74" style="top:838.91px;font-size:14.7px;color:#212529;left:23.55px;transform-origin:0 50%;">Vendas Interestaduais Para Consumidor Final, Não Contribuinte do ICMS?</span>
<span class="t" id="t75" style="top:874.91px;font-size:14.7px;color:#212529;right:1195.20px;transform-origin:100% 50%;">Origem*</span>
<div class="b" style="left:-10px;top:899px;width:745.5px;height:30px;background:#fff;border:1px solid #dcdee2;border-radius:4px;box-sizing:border-box;"></div>
<span class="t" id="t76" style="top:904.15px;font-size:14px;color:#495057;left:-4.50px;transform-origin:0 50%;">0 - Nacional, exceto as indicadas nos códigos 3, 4, 5 e 8</span>
<svg class="b" style="left:722.0px;top:911.4px" width="9.6" height="6.0" viewBox="-1 -1 9.6 6.0"><path d="M0 0 L3.8 4.0 L7.6 0" fill="none" stroke="#474a4d" stroke-width="1.9" stroke-linecap="round" stroke-linejoin="round"/></svg>
<span class="t" id="t77" style="top:936.31px;font-size:14.7px;color:#212529;right:1105.20px;transform-origin:100% 50%;">Tipo Tributação ICMS*</span>
<div class="b" style="left:1223px;top:0px;width:13px;height:953px;background:#a4a7aa;"></div>
<div class="b" style="left:1223px;top:0px;width:2.5px;height:953px;background:#999c9f;"></div>
</div></div>
<div class="clip" style="top:953px;height:489px;"><div class="in" style="top:-953px;height:1442px;">
<div class="b" style="left:0px;top:953px;width:1236px;height:489px;background:#fff;"></div>
<div class="b" style="left:0px;top:953px;width:6px;height:489px;background:#eef1f6;"></div>
<div class="b" style="left:1.2px;top:953px;width:1px;height:489px;background:#dcdde0;"></div>
<div class="b" style="left:5.2px;top:953px;width:1px;height:489px;background:#e0e1e4;"></div>
<div class="b" style="left:6.5px;top:900px;width:1240px;height:439px;background:#fff2cc;border-radius:5px;"></div>
<div class="b" style="left:9.5px;top:900px;width:1240px;height:391.8px;border:1px solid #e4e1d3;border-radius:3px;box-sizing:border-box;"></div>
<div class="b" style="left:14px;top:900px;width:1240px;height:153.5px;background:#fff;border:1px solid #dfe1e4;border-radius:3px;box-sizing:border-box;"></div>
<div class="b" style="left:22px;top:959.2px;width:749.3px;height:29.6px;background:#fff;border:1px solid #dcdee2;border-radius:4px;box-sizing:border-box;"></div>
<span class="t" id="t78" style="top:963.95px;font-size:14px;color:#495057;left:32.00px;transform-origin:0 50%;">1 - Tributação Normal</span>
<svg class="b" style="left:757.8px;top:971.4px" width="9.6" height="6.0" viewBox="-1 -1 9.6 6.0"><path d="M0 0 L3.8 4.0 L7.6 0" fill="none" stroke="#474a4d" stroke-width="1.9" stroke-linecap="round" stroke-linejoin="round"/></svg>
<span class="t" id="t79" style="top:995.71px;font-size:14.7px;color:#212529;left:24.80px;transform-origin:0 50%;">CST / CSOSN*</span>
<div class="b" style="left:22px;top:1018.2px;width:749.3px;height:29.6px;background:#fff;border:1px solid #dcdee2;border-radius:4px;box-sizing:border-box;"></div>
<span class="t" id="t80" style="top:1022.65px;font-size:14px;color:#495057;left:32.00px;transform-origin:0 50%;">00 - TRIBUTADA INTEGRALMENTE</span>
<svg class="b" style="left:757.8px;top:1030.4px" width="9.6" height="6.0" viewBox="-1 -1 9.6 6.0"><path d="M0 0 L3.8 4.0 L7.6 0" fill="none" stroke="#474a4d" stroke-width="1.9" stroke-linecap="round" stroke-linejoin="round"/></svg>
<div class="b" style="left:14px;top:1064.3px;width:1240px;height:105.6px;background:#fff;border:1px solid #dfe1e4;border-radius:3px;box-sizing:border-box;"></div>
<div class="b" style="left:15px;top:1096px;width:1230px;height:1px;background:#dfe1e4;"></div>
<svg class="b" style="left:25.5px;top:1077.0px" width="13" height="8" viewBox="-1 -1 13 8"><path d="M0 0 L5.5 6 L11 0" fill="none" stroke="#212529" stroke-width="2" stroke-linecap="round" stroke-linejoin="round"/></svg>
<span class="t" id="t81" style="top:1070.12px;font-size:16.4px;color:#212529;left:51.20px;transform-origin:0 50%;">ICMS</span>
<span class="t" id="t82" style="top:1108.21px;font-size:14.7px;color:#212529;left:24.80px;transform-origin:0 50%;">Modalidade BC*</span>
<span class="t" id="t83" style="top:1108.96px;font-size:14.7px;color:#212529;left:266.80px;transform-origin:0 50%;">Valor BC ICMS*</span>
<span class="t" id="t84" style="top:1104.96px;font-size:14.7px;color:#212529;left:466.05px;transform-origin:0 50%;">Alíquota ICMS*</span>
<span class="t" id="t85" style="top:1108.96px;font-size:14.7px;color:#212529;left:744.80px;transform-origin:0 50%;">Valor do ICMS*</span>
<div class="b" style="left:22px;top:1131.2px;width:235px;height:29.6px;background:#fff;border:1px solid #dcdee2;border-radius:4px;box-sizing:border-box;"></div>
<span class="t" id="t86" style="top:1135.65px;font-size:14px;color:#495057;left:32.00px;transform-origin:0 50%;">3 - VALOR DA OPERAÇÃO</span>
<svg class="b" style="left:243.5px;top:1143.4px" width="9.6" height="6.0" viewBox="-1 -1 9.6 6.0"><path d="M0 0 L3.8 4.0 L7.6 0" fill="none" stroke="#474a4d" stroke-width="1.9" stroke-linecap="round" stroke-linejoin="round"/></svg>
<div class="b" style="left:264.25px;top:1132.3px;width:192.25px;height:27.4px;background:#fff;border:1px solid #dcdee2;border-radius:4px;box-sizing:border-box;"></div>
<span class="t" id="t87" style="top:1135.65px;font-size:14px;color:#495057;right:785.00px;transform-origin:100% 50%;">20,00</span>
<div class="b" style="left:466.25px;top:1131.2px;width:235px;height:29.6px;background:#fff;border:1px solid #dcdee2;border-radius:4px;box-sizing:border-box;"></div>
<span class="t" id="t88" style="top:1135.65px;font-size:14px;color:#495057;left:476.25px;transform-origin:0 50%;">12.00</span>
<svg class="b" style="left:687.75px;top:1143.4px" width="9.6" height="6.0" viewBox="-1 -1 9.6 6.0"><path d="M0 0 L3.8 4.0 L7.6 0" fill="none" stroke="#474a4d" stroke-width="1.9" stroke-linecap="round" stroke-linejoin="round"/></svg>
<svg class="b" style="left:712.0px;top:1138.35px" width="14.8" height="14.8" viewBox="0 0 16 16"><circle cx="8" cy="8" r="7.1" fill="none" stroke="#212529" stroke-width="1.5"/><path d="M8 4.4 V11.6 M4.4 8 H11.600" stroke="#212529" stroke-width="1.6" stroke-linecap="round"/></svg>
<div class="b" style="left:742px;top:1132.3px;width:240.5px;height:27.4px;background:#fff;border:1px solid #dcdee2;border-radius:4px;box-sizing:border-box;"></div>
<span class="t" id="t89" style="top:1135.65px;font-size:14px;color:#495057;right:259.50px;transform-origin:100% 50%;">2,40</span>
<div class="b" style="left:14px;top:1180.3px;width:1240px;height:97.6px;background:#fff;border:1px solid #dfe1e4;border-radius:3px;box-sizing:border-box;"></div>
<div class="b" style="left:15px;top:1211.8px;width:1230px;height:1px;background:#dfe1e4;"></div>
<svg class="b" style="left:25.5px;top:1193.0px" width="13" height="8" viewBox="-1 -1 13 8"><path d="M0 0 L5.5 6 L11 0" fill="none" stroke="#212529" stroke-width="2" stroke-linecap="round" stroke-linejoin="round"/></svg>
<span class="t" id="t90" style="top:1186.12px;font-size:16.4px;color:#212529;left:51.20px;transform-origin:0 50%;">Fundo de Combate à Pobreza (FCP)</span>
<span class="t" id="t91" style="top:1220.71px;font-size:14.7px;color:#212529;left:24.80px;transform-origin:0 50%;">Valor da BC do FCP*</span>
<span class="t" id="t92" style="top:1220.71px;font-size:14.7px;color:#212529;left:271.80px;transform-origin:0 50%;">Percentual do FCP*</span>
<span class="t" id="t93" style="top:1220.71px;font-size:14.7px;color:#212529;left:519.05px;transform-origin:0 50%;">Valor do FCP*</span>
<div class="b" style="left:22px;top:1244.2px;width:240.5px;height:27.6px;background:#fff;border:1px solid #dcdee2;border-radius:4px;box-sizing:border-box;"></div>
<span class="t" id="t94" style="top:1248.15px;font-size:14px;color:#495057;right:979.00px;transform-origin:100% 50%;">0,00</span>
<div class="b" style="left:269.25px;top:1244.2px;width:240.25px;height:27.6px;background:#fff;border:1px solid #dcdee2;border-radius:4px;box-sizing:border-box;"></div>
<span class="t" id="t95" style="top:1248.15px;font-size:14px;color:#495057;right:732.00px;transform-origin:100% 50%;">0,00</span>
<div class="b" style="left:516.25px;top:1244.2px;width:240.5px;height:27.6px;background:#fff;border:1px solid #dcdee2;border-radius:4px;box-sizing:border-box;"></div>
<span class="t" id="t96" style="top:1248.15px;font-size:14px;color:#495057;right:484.75px;transform-origin:100% 50%;">0,00</span>
<div class="b" style="left:667px;top:1297.3px;width:78.5px;height:33.5px;background:#fff;border:1px solid #e1e3e6;border-radius:4px;box-sizing:border-box;"></div>
<span class="t" id="t97" style="top:1304.16px;font-size:14.7px;color:#0653ea;-webkit-text-stroke:0.45px #0653ea;left:678.05px;transform-origin:0 50%;">Cancelar</span>
<div class="b" style="left:522px;top:1296.8px;width:138px;height:34px;background:#0653ea;border-radius:4px;"></div>
<span class="t" id="t98" style="top:1304.16px;font-size:14.7px;color:#fff;-webkit-text-stroke:0.45px #fff;left:534.80px;transform-origin:0 50%;">Adicionar Produto</span>
<div class="b" style="left:517px;top:1286.8px;width:151px;height:51.2px;border:4px solid #fb0207;border-radius:2px;box-sizing:border-box;"></div>
<span class="t" id="t99" style="top:1356.38px;font-size:12.6px;color:#212529;-webkit-text-stroke:0.4px #212529;left:16.70px;transform-origin:0 50%;">#</span>
<span class="t" id="t100" style="top:1356.38px;font-size:12.6px;color:#212529;-webkit-text-stroke:0.4px #212529;left:38.45px;transform-origin:0 50%;">Alterar</span>
<span class="t" id="t101" style="top:1356.38px;font-size:12.6px;color:#212529;-webkit-text-stroke:0.4px #212529;left:82.20px;transform-origin:0 50%;">Excluir</span>
<span class="t" id="t102" style="top:1356.38px;font-size:12.6px;color:#212529;-webkit-text-stroke:0.4px #212529;left:144.95px;transform-origin:0 50%;">Código</span>
<span class="t" id="t103" style="top:1356.38px;font-size:12.6px;color:#212529;-webkit-text-stroke:0.4px #212529;left:244.70px;transform-origin:0 50%;">Descrição</span>
<span class="t" id="t104" style="top:1354.38px;font-size:12.6px;color:#212529;-webkit-text-stroke:0.4px #212529;left:339.95px;transform-origin:0 50%;">CFOP</span>
<div class="b" style="left:375.3px;top:1359.5px;width:1px;height:13.5px;background:#b0b4b8;"></div>
<span class="t" id="t105" style="top:1356.38px;font-size:12.6px;color:#0b62d6;-webkit-text-stroke:0.25px #0b62d6;left:379.20px;transform-origin:0 50%;text-decoration:underline;text-underline-offset:1.5px;">Aplicar a todos</span>
<span class="t" id="t106" style="top:1356.38px;font-size:12.6px;color:#212529;-webkit-text-stroke:0.4px #212529;left:501.20px;transform-origin:0 50%;">NCM</span>
<span class="t" id="t107" style="top:1356.38px;font-size:12.6px;color:#212529;-webkit-text-stroke:0.4px #212529;left:569.70px;transform-origin:0 50%;">Unid.</span>
<span class="t" id="t108" style="top:1356.38px;font-size:12.6px;color:#212529;-webkit-text-stroke:0.4px #212529;left:624.20px;transform-origin:0 50%;">Qtde.</span>
<span class="t" id="t109" style="top:1356.38px;font-size:12.6px;color:#212529;-webkit-text-stroke:0.4px #212529;left:708.45px;transform-origin:0 50%;">Preço Venda</span>
<span class="t" id="t110" style="top:1356.38px;font-size:12.6px;color:#212529;-webkit-text-stroke:0.4px #212529;left:832.20px;transform-origin:0 50%;">V. Total</span>
<span class="t" id="t111" style="top:1356.38px;font-size:12.6px;color:#212529;-webkit-text-stroke:0.4px #212529;left:919.20px;transform-origin:0 50%;">BC ICMS</span>
<span class="t" id="t112" style="top:1356.38px;font-size:12.6px;color:#212529;-webkit-text-stroke:0.4px #212529;left:1014.95px;transform-origin:0 50%;">V. ICMS</span>
<span class="t" id="t113" style="top:1356.38px;font-size:12.6px;color:#212529;-webkit-text-stroke:0.4px #212529;left:1107.70px;transform-origin:0 50%;">Aliq. ICMS</span>
<span class="t" id="t114" style="top:1356.38px;font-size:12.6px;color:#212529;-webkit-text-stroke:0.4px #212529;left:1209.95px;transform-origin:0 50%;">Frete</span>
<div class="b" style="left:7px;top:1377px;width:1240px;height:2px;background:#25282c;"></div>
<div class="b" style="left:34.5px;top:1379px;width:1px;height:28px;background:#dddddd;"></div>
<div class="b" style="left:77.75px;top:1379px;width:1px;height:28px;background:#dddddd;"></div>
<div class="b" style="left:121.5px;top:1379px;width:1px;height:28px;background:#dddddd;"></div>
<div class="b" style="left:206.5px;top:1379px;width:1px;height:28px;background:#dddddd;"></div>
<div class="b" style="left:335.75px;top:1379px;width:1px;height:28px;background:#dddddd;"></div>
<div class="b" style="left:463.75px;top:1379px;width:1px;height:28px;background:#dddddd;"></div>
<div class="b" style="left:564.75px;top:1379px;width:1px;height:28px;background:#dddddd;"></div>
<div class="b" style="left:602.75px;top:1379px;width:1px;height:28px;background:#dddddd;"></div>
<div class="b" style="left:674.75px;top:1379px;width:1px;height:28px;background:#dddddd;"></div>
<div class="b" style="left:809.75px;top:1379px;width:1px;height:28px;background:#dddddd;"></div>
<div class="b" style="left:893.75px;top:1379px;width:1px;height:28px;background:#dddddd;"></div>
<div class="b" style="left:991.75px;top:1379px;width:1px;height:28px;background:#dddddd;"></div>
<div class="b" style="left:1078.75px;top:1379px;width:1px;height:28px;background:#dddddd;"></div>
<div class="b" style="left:1191.75px;top:1379px;width:1px;height:28px;background:#dddddd;"></div>
<span class="t" id="t115" style="top:1382.63px;font-size:12.6px;color:#212529;-webkit-text-stroke:0.4px #212529;left:17.95px;transform-origin:0 50%;">1</span>
<svg class="b" style="left:48.9px;top:1385.1px" width="16" height="16" viewBox="0 0 16 16"><g transform="translate(1.2 15.1) rotate(-45)" fill="none" stroke="#212529" stroke-width="1.35" stroke-linejoin="round" stroke-linecap="round"><path d="M0 0 L4.3 -2.9 L16.1 -2.9 a1.5 1.5 0 0 1 1.5 1.5 L17.6 1.4 a1.5 1.5 0 0 1 -1.5 1.5 L4.3 2.9 Z"/><path d="M13.3 -2.9 V2.9 M6.2 -2.9 V2.9"/></g></svg>
<svg class="b" style="left:93.1px;top:1386.25px" width="15" height="15" viewBox="0 0 16 16"><circle cx="8" cy="8" r="7" fill="none" stroke="#dc2a36" stroke-width="1.6"/><path d="M5.8 5.8 L10.2 10.2 M10.2 5.8 L5.8 10.2" stroke="#dc2a36" stroke-width="2" stroke-linecap="round"/></svg>
<span class="t" id="t116" style="top:1382.63px;font-size:12.6px;color:#2a2e33;left:125.95px;transform-origin:0 50%;">1075-01</span>
<span class="t" id="t117" style="top:1382.63px;font-size:12.6px;color:#2a2e33;left:210.45px;transform-origin:0 50%;">Coca-Cola 2L</span>
<span class="t" id="t118" style="top:1382.63px;font-size:12.6px;color:#2a2e33;left:387.45px;transform-origin:0 50%;">6102</span>
<span class="t" id="t119" style="top:1382.63px;font-size:12.6px;color:#2a2e33;left:489.70px;transform-origin:0 50%;">38151290</span>
<span class="t" id="t120" style="top:1382.63px;font-size:12.6px;color:#2a2e33;left:576.20px;transform-origin:0 50%;">UN</span>
<span class="t" id="t121" style="top:1382.63px;font-size:12.6px;color:#2a2e33;right:563.95px;transform-origin:100% 50%;">1,0000</span>
<span class="t" id="t122" style="top:1382.63px;font-size:12.6px;color:#2a2e33;right:428.95px;transform-origin:100% 50%;">20,0000</span>
<span class="t" id="t123" style="top:1382.63px;font-size:12.6px;color:#2a2e33;right:345.20px;transform-origin:100% 50%;">20,00</span>
<span class="t" id="t124" style="top:1382.63px;font-size:12.6px;color:#2a2e33;right:246.95px;transform-origin:100% 50%;">20,00</span>
<span class="t" id="t125" style="top:1382.63px;font-size:12.6px;color:#2a2e33;right:159.45px;transform-origin:100% 50%;">2,40</span>
<span class="t" id="t126" style="top:1382.63px;font-size:12.6px;color:#2a2e33;right:46.70px;transform-origin:100% 50%;">12,00</span>
<span class="t" id="t127" style="top:1382.63px;font-size:12.6px;color:#2a2e33;left:1230.20px;transform-origin:0 50%;">3,00</span>
<div class="b" style="left:7px;top:1407px;width:1240px;height:40px;background:#e8e8e8;"></div>
<div class="b" style="left:7px;top:1441px;width:1240px;height:1px;background:#f3f3f3;"></div>
<span class="t" id="t128" style="top:1414.14px;font-size:12px;color:#212529;-webkit-text-stroke:0.45px #212529;left:16.20px;transform-origin:0 50%;">Legenda:</span>
<svg class="b" style="left:63.9px;top:1415.3999999999999px" width="16" height="16" viewBox="0 0 16 16"><g transform="translate(1.2 15.1) rotate(-45)" fill="none" stroke="#212529" stroke-width="1.35" stroke-linejoin="round" stroke-linecap="round"><path d="M0 0 L4.3 -2.9 L16.1 -2.9 a1.5 1.5 0 0 1 1.5 1.5 L17.6 1.4 a1.5 1.5 0 0 1 -1.5 1.5 L4.3 2.9 Z"/><path d="M13.3 -2.9 V2.9 M6.2 -2.9 V2.9"/></g></svg>
<span class="t" id="t129" style="top:1414.14px;font-size:12px;color:#212529;left:81.50px;transform-origin:0 50%;">Alterar</span>
<svg class="b" style="left:116.89999999999999px;top:1416.3px" width="14.4" height="14.4" viewBox="0 0 16 16"><circle cx="8" cy="8" r="7" fill="none" stroke="#dc2a36" stroke-width="1.6"/><path d="M5.8 5.8 L10.2 10.2 M10.2 5.8 L5.8 10.2" stroke="#dc2a36" stroke-width="2" stroke-linecap="round"/></svg>
<span class="t" id="t130" style="top:1414.14px;font-size:12px;color:#212529;left:134.00px;transform-origin:0 50%;">Excluir</span>
</div></div>
</body></html>
